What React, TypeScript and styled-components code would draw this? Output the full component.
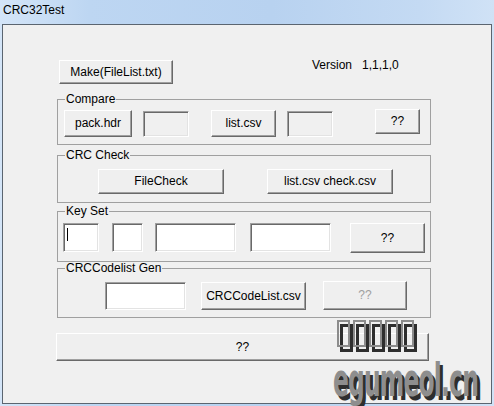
import * as React from 'react';
import styled, { createGlobalStyle } from 'styled-components';

const GlobalStyle = createGlobalStyle`
    html, body {
        margin: 0;
        padding: 0;
        background: #c3d9f2;
    }
`;

const Page = styled.div`
    position: relative;
    width: 494px;
    height: 406px;
    overflow: hidden;
    display: flex;
    flex-direction: column;
    font-family: "Liberation Sans", Arial, sans-serif;
    font-size: 12px;
    color: #000;
    background: linear-gradient(to right, #d4e5f8 0%, #bdd6f2 18%, #b8d2f0 55%, #c4daf3 85%, #d0e2f6 100%);
`;

const TitleBar = styled.div`
    height: 24px;
    padding-left: 3px;
    line-height: 20px;
    font-size: 12px;
    color: #000;
`;

const Window = styled.div`
    margin: 0 2px;
    height: 380px;
    box-sizing: border-box;
    border: 1px solid #5b6570;
    background: #f0f0f0;
`;

const Client = styled.div`
    display: flex;
    flex-direction: column;
    padding: 35px 0 0 54px;
`;

const TopRow = styled.div`
    display: flex;
    align-items: flex-start;
    margin-left: 2px;
`;

const Version = styled.div`
    margin: -2px 0 0 139px;
    line-height: 14px;
    white-space: pre;
`;

const Group = styled.fieldset<{ $mt: number; $pad: string }>`
    margin: ${p => p.$mt}px 0 0 0;
    padding: ${p => p.$pad};
    width: 374px;
    min-width: 0;
    box-sizing: border-box;
    border: 1px solid #a0a0a0;
`;

const Legend = styled.legend`
    margin-left: 7px;
    padding: 0 1px;
    line-height: 14px;
    font-size: 12px;
`;

const Row = styled.div`
    display: flex;
    align-items: flex-start;
`;

const Button = styled.div<{ $w: number; $h: number; $ml?: number; $mt?: number; $disabled?: boolean }>`
    width: ${p => p.$w}px;
    height: ${p => p.$h}px;
    margin-left: ${p => p.$ml || 0}px;
    margin-top: ${p => p.$mt || 0}px;
    box-sizing: border-box;
    display: flex;
    align-items: center;
    justify-content: center;
    background: #efefef;
    border: 1px solid;
    border-color: #fff #696969 #696969 #fff;
    box-shadow: inset -1px -1px 0 #a0a0a0;
    color: ${p => (p.$disabled ? '#a0a0a0' : '#000')};
    white-space: nowrap;
    padding-bottom: 1px;
`;

const Edit = styled.div<{ $w: number; $h: number; $ml?: number; $mt?: number; $disabled?: boolean }>`
    width: ${p => p.$w}px;
    height: ${p => p.$h}px;
    margin-left: ${p => p.$ml || 0}px;
    margin-top: ${p => p.$mt || 0}px;
    box-sizing: border-box;
    display: flex;
    align-items: flex-start;
    background: ${p => (p.$disabled ? '#f0f0f0' : '#fff')};
    border: 1px solid;
    border-color: #a0a0a0 #fff #fff #a0a0a0;
    box-shadow: inset 1px 1px 0 #696969, inset -1px -1px 0 #e3e3e3;
`;

const Caret = styled.span`
    width: 1px;
    height: 13px;
    margin: 4px 0 0 3px;
    background: #000;
`;

const BigButton = styled(Button)`
    margin-left: -1px;
`;

const Tofu = styled.svg`
    position: absolute;
    left: 336px;
    top: 319px;
`;

const Watermark = styled.div`
    position: absolute;
    left: 333px;
    top: 363px;
    font-family: "DejaVu Sans Condensed", "DejaVu Sans", sans-serif;
    font-weight: bold;
    font-size: 26px;
    line-height: 20px;
    letter-spacing: -0.8px;
    color: #8e8e8e;
    text-shadow: 3px 2px 0 #2e2e2e;
    transform: scaleY(1.75);
    transform-origin: left top;
    white-space: nowrap;
`;

export default function App() {
    return (
        <Page>
            <GlobalStyle />
            <TitleBar>CRC32Test</TitleBar>
            <Window>
                <Client>
                    <TopRow>
                        <Button $w={114} $h={24}>Make(FileList.txt)</Button>
                        <Version>{'Version   1,1,1,0'}</Version>
                    </TopRow>

                    <Group $mt={8} $pad="3px 0 7px 0">
                        <Legend>Compare</Legend>
                        <Row>
                            <Button $w={68} $h={27} $ml={6} $mt={1}>pack.hdr</Button>
                            <Edit $w={46} $h={26} $ml={11} $mt={2} $disabled />
                            <Button $w={65} $h={27} $ml={22} $mt={1}>list.csv</Button>
                            <Edit $w={46} $h={26} $ml={11} $mt={2} $disabled />
                            <Button $w={45} $h={25} $ml={42}>??</Button>
                        </Row>
                    </Group>

                    <Group $mt={3} $pad="7px 0 8px 0">
                        <Legend>CRC Check</Legend>
                        <Row>
                            <Button $w={126} $h={25} $ml={40}>FileCheck</Button>
                            <Button $w={126} $h={25} $ml={43}>list.csv check.csv</Button>
                        </Row>
                    </Group>

                    <Group $mt={1} $pad="5px 0 8px 0">
                        <Legend>Key Set</Legend>
                        <Row>
                            <Edit $w={36} $h={29} $ml={5}><Caret /></Edit>
                            <Edit $w={31} $h={29} $ml={13} />
                            <Edit $w={81} $h={29} $ml={12} />
                            <Edit $w={81} $h={29} $ml={14} />
                            <Button $w={75} $h={30} $ml={19}>??</Button>
                        </Row>
                    </Group>

                    <Group $mt={-1} $pad="6px 0 7px 0">
                        <Legend>CRCCodelist Gen</Legend>
                        <Row>
                            <Edit $w={81} $h={28} $ml={47} $mt={1} />
                            <Button $w={105} $h={28} $ml={15} $mt={1}>CRCCodeList.csv</Button>
                            <Button $w={84} $h={29} $ml={17} $disabled>??</Button>
                        </Row>
                    </Group>

                    <BigButton $w={373} $h={28} $mt={15}>??</BigButton>
                </Client>
            </Window>

            <Tofu width="84" height="36" viewBox="0 0 84 36">
                {[0, 1, 2, 3, 4].map(i => (
                    <rect key={'d' + i} x={i * 16 + 5.5} y={6.5} width={10} height={25} fill="none" stroke="#2e2e2e" strokeWidth={3} />
                ))}
                {[0, 1, 2, 3, 4].map(i => (
                    <rect key={'g' + i} x={i * 16 + 2} y={2} width={11} height={25} fill="none" stroke="#8c8c8c" strokeWidth={2} />
                ))}
            </Tofu>

            <Watermark>egumeol.cn</Watermark>
        </Page>
    );
}
